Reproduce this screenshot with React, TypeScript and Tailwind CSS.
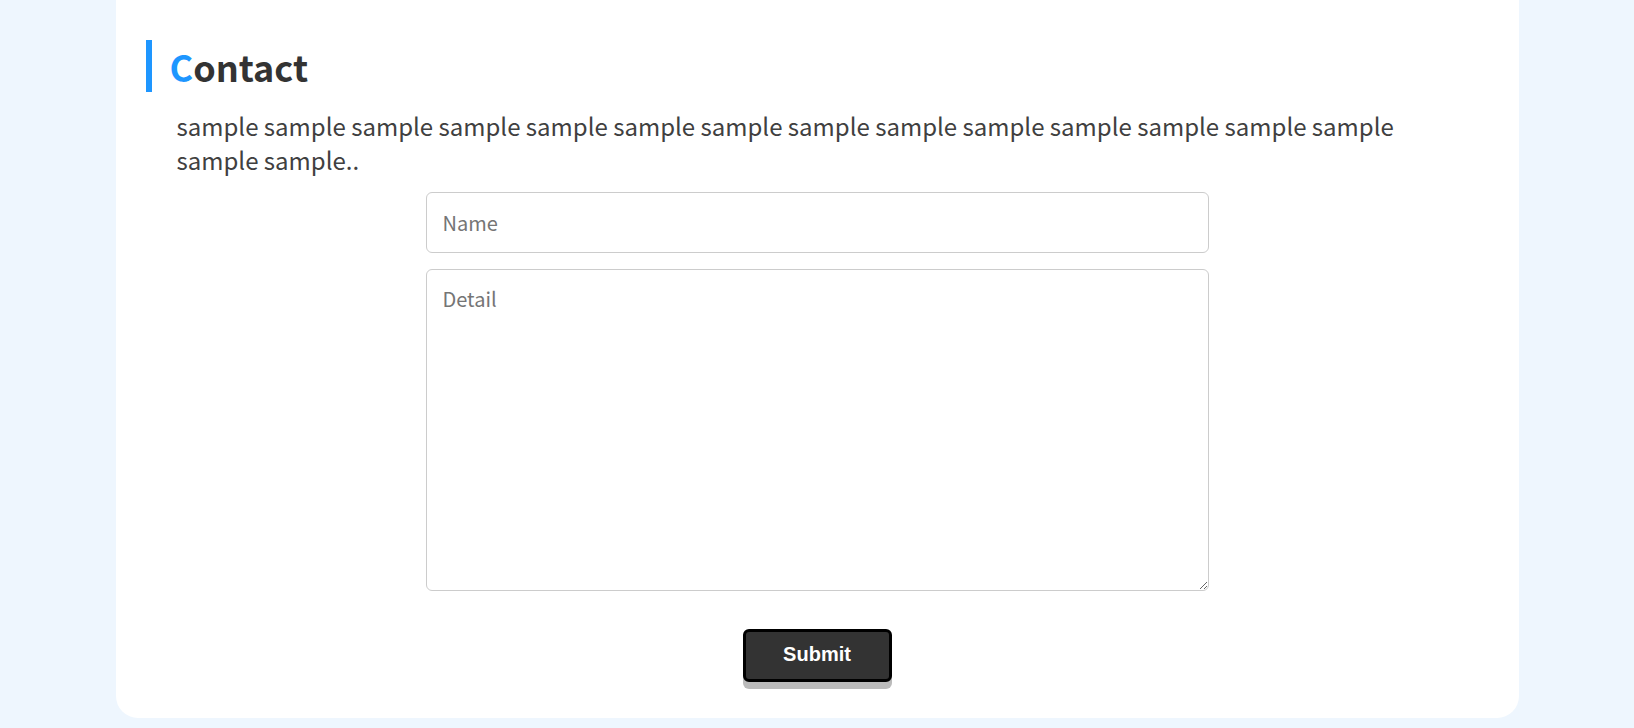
import React from 'react';

const sans = "font-['Noto_Sans_CJK_JP','Noto_Sans',sans-serif]";

const App: React.FC = () => {
  return (
    <div className={`min-h-screen bg-[#eef6fe] ${sans} text-[#333]`}>
      <div className="mx-auto w-[1403px] bg-white rounded-b-[22px] pt-[40px] pb-[36px]">
        {/* Heading */}
        <h2 className="ml-[30px] h-[52px] flex items-center border-l-[6px] border-[#1e96ff] pl-[18px] text-[36px] font-bold leading-[52px]">
          <span className="text-[#1e96ff]">C</span>ontact
        </h2>

        <p className="mx-[61px] mt-[17px] text-[24px] leading-[34px] text-[#404040]">
          sample sample sample sample sample sample sample sample sample sample sample sample sample sample sample sample..
        </p>

        {/* Form */}
        <form className="mt-[15px] flex flex-col items-center gap-[16px]" onSubmit={(e) => e.preventDefault()}>
          <input
            type="text"
            placeholder="Name"
            className="w-[783px] h-[61px] border border-[#ccc] rounded-[6px] px-4 text-[20px] placeholder:text-[#757575] outline-none"
          />
          <textarea
            placeholder="Detail"
            className="w-[783px] h-[322px] border border-[#ccc] rounded-[6px] px-4 pt-[15px] text-[20px] leading-[28px] placeholder:text-[#757575] outline-none"
          />
          <button
            type="submit"
            className="mt-[22px] w-[149px] h-[53px] pb-[3px] border-[3px] border-black rounded-[6px] bg-[#333] text-white text-[20px] font-bold font-['Liberation_Sans',Arial,sans-serif] shadow-[0_7px_0_#bbb]"
          >
            Submit
          </button>
        </form>
      </div>
    </div>
  );
};

export default App;
